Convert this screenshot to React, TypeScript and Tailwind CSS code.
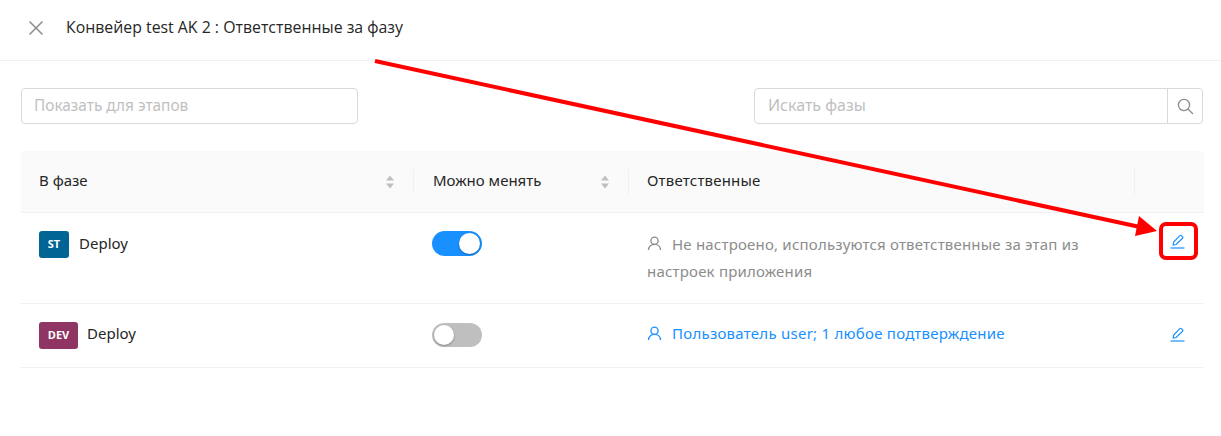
import React from "react";

function CloseIcon() {
  return (
    <svg className="w-[16px] h-[16px] text-[#8c8c8c]" viewBox="0 0 16 16" fill="none" stroke="currentColor" strokeWidth="1.5">
      <path d="M1.5 1.5l13 13M14.5 1.5l-13 13" />
    </svg>
  );
}

function SearchIcon() {
  return (
    <svg className="w-[17px] h-[17px] text-[#8c8c8c]" viewBox="0 0 17 17" fill="none" stroke="currentColor" strokeWidth="1.3">
      <circle cx="7" cy="7" r="5.6" />
      <path d="M11 11l5 5" />
    </svg>
  );
}

function SortIcon() {
  return (
    <svg className="w-[10px] h-[16px] text-[#bfbfbf]" viewBox="0 0 10 16" fill="currentColor">
      <path d="M5 1.5L9 6.5H1z" />
      <path d="M5 14.5L1 9.5H9z" />
    </svg>
  );
}

function UserIcon({ className }: { className: string }) {
  return (
    <svg className={className} viewBox="0 0 14 15" fill="none" stroke="currentColor" strokeWidth="1.3">
      <circle cx="7" cy="4.7" r="3.6" />
      <path d="M1 14c0-3.3 2.4-5.7 6-5.7s6 2.4 6 5.7" />
    </svg>
  );
}

function PenIcon() {
  return (
    <svg className="w-[15px] h-[15px] text-[#1890ff]" viewBox="0 0 15 15" fill="none" stroke="currentColor" strokeWidth="1.2">
      <path d="M3.2 11l.5-3L9.8 1.6a1.1 1.1 0 0 1 1.6 0l1.1 1.1a1.1 1.1 0 0 1 0 1.6L6.2 10.5z" />
      <path d="M.5 14h14" />
    </svg>
  );
}

function Toggle({ on }: { on: boolean }) {
  return (
    <div className={`w-[50px] rounded-full flex items-center px-[2px] ${on ? "h-[25px] bg-[#1890ff] justify-end" : "h-[24px] bg-[#bfbfbf] justify-start"}`}>
      <div className={`rounded-full bg-white shadow-[0_1px_2px_rgba(0,0,0,0.3)] ${on ? "w-[21px] h-[21px]" : "w-[20px] h-[20px]"}`} />
    </div>
  );
}

function Badge({ label, color, width }: { label: string; color: string; width: string }) {
  return (
    <span className={`${color} ${width} h-[27px] rounded-[3px] flex items-center justify-center text-white text-[11px] font-bold font-['Open_Sans',sans-serif] shrink-0`}>
      {label}
    </span>
  );
}

export default function App() {
  return (
    <div className="relative w-[1221px] h-[436px] overflow-hidden bg-white font-['Noto_Sans','Open_Sans',sans-serif] text-[15px] text-[#262626]">
      <div className="h-[61px] border-b border-[#f0f0f0] flex items-center pl-[28px]">
        <div className="-mt-[5px]">
          <CloseIcon />
        </div>
        <span className="ml-[22px] text-[15.85px] -mt-[5px] font-['Open_Sans',sans-serif] text-[#262626]">
          Конвейер test AK 2 : Ответственные за фазу
        </span>
      </div>

      <div className="flex justify-between pl-[21px] pr-[18px] mt-[27px]">
        <div className="w-[337px] h-[36px] border border-[#d9d9d9] rounded-[4px] flex items-center pl-[12px] text-[15.4px] text-[#bfbfbf]">
          Показать для этапов
        </div>
        <div className="w-[449px] h-[36px] border border-[#d9d9d9] rounded-[4px] flex items-center">
          <span className="flex-1 px-[13px] pb-[2px] text-[16px] text-[#bfbfbf]">Искать фазы</span>
          <span className="w-[35px] h-full border-l border-[#d9d9d9] flex items-center justify-center">
            <SearchIcon />
          </span>
        </div>
      </div>

      <div className="ml-[21px] w-[1183px] mt-[27px]">
        <div className="h-[62px] bg-[#fafafa] rounded-t-[4px] border-b border-[#f0f0f0] flex items-center">
          <div className="w-[393px] h-[25px] border-r border-[#f0f0f0] flex items-center justify-between pl-[18px] pr-[18px]">
            <span className="-mt-[3px]">В фазе</span>
            <SortIcon />
          </div>
          <div className="w-[215px] h-[25px] border-r border-[#f0f0f0] flex items-center justify-between pl-[19px] pr-[18px]">
            <span className="-mt-[3px]">Можно менять</span>
            <SortIcon />
          </div>
          <div className="w-[506px] h-[25px] border-r border-[#f0f0f0] flex items-center pl-[18px]">
            <span className="-mt-[3px] tracking-[0.2px]">Ответственные</span>
          </div>
        </div>

        <div className="h-[91px] border-b border-[#f0f0f0] flex items-start">
          <div className="w-[393px] pl-[18px] pt-[18px] flex items-center gap-[10px] h-[45px]">
            <Badge label="ST" color="bg-[#006494]" width="w-[30px]" />
            <span className="-mt-[3px]">Deploy</span>
          </div>
          <div className="w-[215px] pl-[18px] pt-[18px]">
            <Toggle on />
          </div>
          <div className="w-[506px] pl-[18px] pr-[50px] pt-[18px] text-[#8c8c8c] leading-[27px] tracking-[0.2px]">
            <UserIcon className="inline-block w-[15px] h-[15px] mr-[10px] align-[-1px]" />
            Не настроено, используются ответственные за этап из настроек приложения
          </div>
          <div className="w-[69px] pt-[21px] flex justify-center pl-[15px]">
            <PenIcon />
          </div>
        </div>

        <div className="h-[64px] border-b border-[#f0f0f0] flex items-center pb-[1px]">
          <div className="w-[393px] pl-[18px] flex items-center gap-[9px]">
            <Badge label="DEV" color="bg-[#8f3563]" width="w-[39px]" />
            <span className="-mt-[3px]">Deploy</span>
          </div>
          <div className="w-[215px] pl-[18px]">
            <Toggle on={false} />
          </div>
          <div className="w-[506px] pl-[18px] flex items-center text-[#1890ff] tracking-[0.25px]">
            <UserIcon className="w-[15px] h-[15px] mr-[10px] -mt-[3px]" />
            <span className="-mt-[3px]">Пользователь user; 1 любое подтверждение</span>
          </div>
          <div className="w-[69px] flex justify-center pl-[15px] -mt-[2px]">
            <PenIcon />
          </div>
        </div>
      </div>

      {/* red annotation drawn over the page */}
      <svg className="absolute left-0 top-0 w-[1221px] h-[436px] pointer-events-none" viewBox="0 0 1221 436" fill="none">
        <path d="M375 61L1140 227" stroke="#ff0000" strokeWidth="4" />
        <path d="M1157 231L1135 236L1139 216z" fill="#ff0000" />
        <rect x="1161" y="224" width="35" height="34" rx="5" stroke="#ff0000" strokeWidth="4" />
      </svg>
    </div>
  );
}
